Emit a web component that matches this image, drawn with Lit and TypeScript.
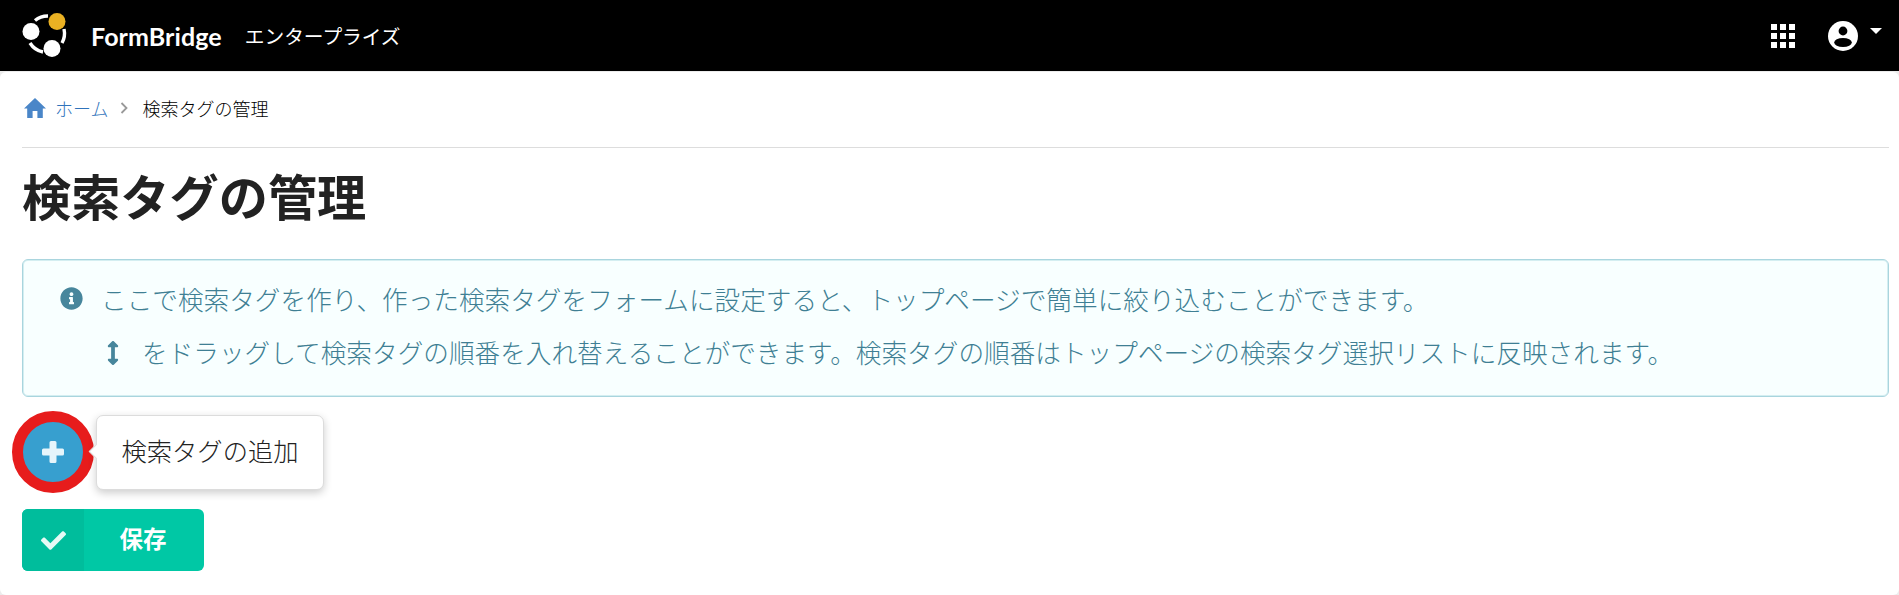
import { LitElement, html, css, svg } from "lit";
import { customElement } from "lit/decorators.js";

const ICON = {
  check: "M173.898 439.404l-166.4-166.4c-9.997-9.997-9.997-26.206 0-36.204l36.203-36.204c9.997-9.998 26.207-9.998 36.204 0L192 312.69 432.095 72.596c9.997-9.997 26.207-9.997 36.204 0l36.203 36.204c9.997 9.997 9.997 26.206 0 36.204l-294.4 294.401c-9.998 9.997-26.207 9.997-36.204-.001z",
  info: "M256 8C119.043 8 8 119.083 8 256c0 136.997 111.043 248 248 248s248-111.003 248-248C504 119.083 392.957 8 256 8zm0 110c23.196 0 42 18.804 42 42s-18.804 42-42 42-42-18.804-42-42 18.804-42 42-42zm56 254c0 6.627-5.373 12-12 12h-88c-6.627 0-12-5.373-12-12v-24c0-6.627 5.373-12 12-12h12v-64h-12c-6.627 0-12-5.373-12-12v-24c0-6.627 5.373-12 12-12h64c6.627 0 12 5.373 12 12v100h12c6.627 0 12 5.373 12 12v24z",
  arrows: "M214.059 377.941H168V134.059h46.059c21.382 0 32.09-25.851 16.971-40.971L144.971 7.029c-9.373-9.373-24.568-9.373-33.941 0L24.971 93.088c-15.119 15.119-4.411 40.971 16.971 40.971H88v243.882H41.941c-21.382 0-32.09 25.851-16.971 40.971l86.059 86.059c9.373 9.373 24.568 9.373 33.941 0l86.059-86.059c15.12-15.119 4.412-40.971-16.97-40.971z",
};

@customElement("app-root")
export class AppRoot extends LitElement {
  static styles = css`
    :host { display: block; height: 595px; overflow: hidden; background: #ececec; font-family: "Noto Sans CJK JP", "Noto Sans", sans-serif; color: #222; }
    .top { height: 71px; background: #000; display: flex; align-items: center; color: #fff; }
    .logo { margin-left: 22px; width: 50px; height: 50px; flex: none; }
    .brand { margin-left: 19px; font-family: Lato, sans-serif; font-weight: 700; font-size: 25px; letter-spacing: .1px; }
    .edition { margin-left: 23px; font-size: 19.7px; font-weight: 400; }
    .spacer { flex: 1; }
    .grid { width: 24px; height: 24px; margin-right: 33px; display: block; }
    .user { width: 30px; height: 30px; display: block; }
    .caret { width: 0; height: 0; border: 6.5px solid transparent; border-top: 6px solid #fff; border-bottom: 0; margin: 0 17px 10px 12px; }
    .page { box-sizing: border-box; height: 523px; margin-top: 1px; background: #fff; border-radius: 6px; padding: 0 10px 0 22px; }
    .crumbs { height: 76px; padding: 0 0 4px 2px; box-sizing: border-box; display: flex; align-items: center; font-size: 18px; font-weight: 300; color: #000; border-bottom: 1px solid #ddd; }
    .crumbs a { color: #2f73bb; margin-left: 9px; }
    .home { width: 22px; height: 20px; display: block; fill: #4a86c8; }
    .sep { width: 8px; height: 12px; margin: 0 14px 0 12px; display: block; }
    h1 { margin: 0; box-sizing: border-box; height: 111px; font-size: 49.2px; line-height: 72px; font-weight: 700; padding-top: 11px; color: #222; }
    .msg { box-sizing: border-box; height: 138px; border: 1px solid #a9d5de; border-radius: 6px; background: #f8ffff; color: #3f7f94; font-size: 25.65px; font-weight: 300; display: flex; flex-direction: column; padding: 19px 0 0 37px; gap: 15px; box-shadow: inset 0 0 0 1px #d4eef1; }
    .line { display: flex; align-items: center; height: 38px; }
    .line svg { fill: #47869c; display: block; flex: none; }
    .i1 { width: 23px; height: 23px; margin-right: 18px; }
    .i2 { width: 12px; height: 24px; margin: 3px 23px 0 47px; }
    .addrow { display: flex; align-items: center; margin: 14px 0 0 -10px; }
    .ring { box-sizing: border-box; width: 82px; height: 82px; border-radius: 50%; border: 11px solid #e71c1c; background: #379fcf; display: flex; align-items: center; justify-content: center; flex: none; }
    .ring svg { width: 22px; height: 22px; fill: #e6f5fb; display: block; }
    .tip { position: relative; margin-left: 2px; box-sizing: border-box; width: 228px; height: 75px; padding-bottom: 4px; background: #fff; border: 1px solid #dcdcdc; border-radius: 7px; box-shadow: 0 3px 9px rgba(0,0,0,.2); font-size: 25.3px; font-weight: 300; display: flex; align-items: center; justify-content: center; color: #222; }
    .tip::before { content: ""; position: absolute; left: -6px; top: 30px; width: 10px; height: 10px; background: #fff; transform: rotate(45deg); border-left: 1px solid #ddd; border-bottom: 1px solid #ddd; }
    .save { margin-top: 16px; width: 182px; height: 62px; border-radius: 6px; background: #00c8a5; display: flex; overflow: hidden; color: #fff; font-size: 23.5px; font-weight: 700; }
    .save .l { width: 62px; background: #00bd9c; display: flex; align-items: center; justify-content: center; }
    .save .l svg { width: 25px; height: 25px; fill: #e6faf5; display: block; }
    .save .r { flex: 1; display: flex; align-items: center; justify-content: center; padding: 0 2px 4px 0; }
  `;

  private logo() {
    return html`<svg class="logo" viewBox="0 0 50 50">
      <g fill="none" stroke="#fff" stroke-width="3.4">
        <path d="M13 9.5 A20 20 0 0 1 26 5"/>
        <path d="M42 18 A20 20 0 0 1 40 32"/>
        <path d="M8 32 A20 20 0 0 0 21 41"/>
      </g>
      <circle cx="9" cy="20.5" r="8.5" fill="#fff"/>
      <circle cx="35" cy="10.5" r="8.5" fill="#eab123"/>
      <circle cx="30" cy="37.5" r="8.5" fill="#fff"/>
    </svg>`;
  }

  private gridIcon() {
    const xs = [0, 9, 18];
    return html`<svg class="grid" viewBox="0 0 24 24" fill="#fff">
      ${xs.map((y) => xs.map((x) => svg`<rect x=${x} y=${y} width="6" height="6"/>`))}
    </svg>`;
  }

  render() {
    return html`
      <div class="top">
        ${this.logo()}
        <span class="brand">FormBridge</span>
        <span class="edition">エンタープライズ</span>
        <span class="spacer"></span>
        ${this.gridIcon()}
        <svg class="user" viewBox="0 0 30 30">
          <circle cx="15" cy="15" r="15" fill="#fff"/>
          <circle cx="15" cy="10" r="4.4" fill="#000"/>
          <ellipse cx="15" cy="21.5" rx="8.8" ry="4.6" fill="#000"/>
        </svg>
        <span class="caret"></span>
      </div>
      <div class="page">
        <div class="crumbs">
          <svg class="home" viewBox="0 0 22 20"><path d="M11 0 L22 10.5 H18.8 V20 H13.4 V13 H8.6 V20 H3.2 V10.5 H0 Z"/></svg>
          <a>ホーム</a>
          <svg class="sep" viewBox="0 0 8 12"><path d="M1.5 1 L6.5 6 L1.5 11" fill="none" stroke="#999" stroke-width="1.8"/></svg>
          <span>検索タグの管理</span>
        </div>
        <h1>検索タグの管理</h1>
        <div class="msg">
          <div class="line">
            <svg class="i1" viewBox="0 0 512 512"><path d=${ICON.info}/></svg>
            <span>ここで検索タグを作り、作った検索タグをフォームに設定すると、トップページで簡単に絞り込むことができます。</span>
          </div>
          <div class="line">
            <svg class="i2" viewBox="0 0 256 512"><path d=${ICON.arrows}/></svg>
            <span>をドラッグして検索タグの順番を入れ替えることができます。検索タグの順番はトップページの検索タグ選択リストに反映されます。</span>
          </div>
        </div>
        <div class="addrow">
          <div class="ring"><svg viewBox="0 0 22 22"><path d="M7.5 1.5 A1.5 1.5 0 0 1 9 0 H13 A1.5 1.5 0 0 1 14.5 1.5 V7.5 H20.5 A1.5 1.5 0 0 1 22 9 V13 A1.5 1.5 0 0 1 20.5 14.5 H14.5 V20.5 A1.5 1.5 0 0 1 13 22 H9 A1.5 1.5 0 0 1 7.5 20.5 V14.5 H1.5 A1.5 1.5 0 0 1 0 13 V9 A1.5 1.5 0 0 1 1.5 7.5 H7.5 Z"/></svg></div>
          <div class="tip">検索タグの追加</div>
        </div>
        <div class="save">
          <div class="l"><svg viewBox="0 0 512 512"><path d=${ICON.check}/></svg></div>
          <div class="r">保存</div>
        </div>
      </div>
    `;
  }
}
